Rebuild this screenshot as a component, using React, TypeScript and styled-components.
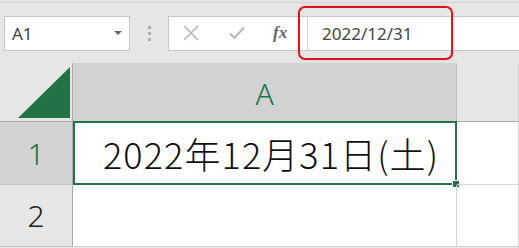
import React from 'react';
import styled, { createGlobalStyle } from 'styled-components';

const GlobalStyle = createGlobalStyle`
  html, body {
    margin: 0;
    padding: 0;
    background: #e6e6e6;
    overflow: hidden;
  }
`;

const Page = styled.div`
  width: 519px;
  height: 248px;
  background: #e6e6e6;
  font-family: 'Noto Sans', 'Liberation Sans', sans-serif;
`;

const TopRule = styled.div`
  height: 2px;
  border-bottom: 1px solid #d3d3d3;
`;

const Toolbar = styled.div`
  position: relative;
  display: flex;
  align-items: center;
  height: 60px;
  box-sizing: border-box;
  padding: 12px 0;
`;

const NameBox = styled.div`
  margin-left: 4px;
  width: 126px;
  height: 35px;
  box-sizing: border-box;
  background: #fff;
  border: 1px solid #c6c6c6;
  display: flex;
  align-items: center;
  justify-content: space-between;
  padding: 0 7px 0 7px;
  font-size: 17px;
  color: #444;
`;

const Caret = styled.span`
  width: 0;
  height: 0;
  border-left: 4px solid transparent;
  border-right: 4px solid transparent;
  border-top: 4px solid #666;
`;

const Grip = styled.div`
  width: 38px;
  display: flex;
  flex-direction: column;
  align-items: center;
  gap: 3px;
  span {
    width: 3px;
    height: 3px;
    background: #b0b0b0;
  }
`;

const FormulaBar = styled.div`
  flex: 1;
  height: 35px;
  display: flex;
  box-sizing: border-box;
  border: 1px solid #c6c6c6;
  border-right: none;
  background: #fff;
`;

const Buttons = styled.div`
  width: 139px;
  display: flex;
  align-items: center;
  padding-left: 14px;
  gap: 30px;
  box-sizing: border-box;
  border-right: 1px solid #d4d4d4;
`;

const Fx = styled.span`
  font-family: 'Liberation Serif', serif;
  font-style: italic;
  font-weight: bold;
  font-size: 17px;
  color: #666;
  margin-left: -2px;
`;

const FormulaInput = styled.div`
  flex: 1;
  display: flex;
  align-items: center;
  padding-left: 14px;
  font-size: 17px;
  color: #444;
`;

const Highlight = styled.div`
  position: absolute;
  left: 298px;
  top: 3px;
  width: 155px;
  height: 54px;
  box-sizing: border-box;
  border: 2px solid #e0141e;
  border-radius: 7px;
  box-shadow: 0 0 3px rgba(0, 0, 0, 0.15);
`;

const Grid = styled.div`
  display: grid;
  grid-template-columns: 73px 384px 1fr;
  grid-template-rows: 59px 63px 62px;
  background: #fff;
`;

const Corner = styled.div`
  background: #e6e6e6;
  border-right: 1px solid #ababab;
  border-bottom: 1px solid #ababab;
  display: flex;
  align-items: flex-end;
  justify-content: flex-end;
  padding: 0 2px 3px 0;
`;

const ColHeader = styled.div<{ $active?: boolean }>`
  background: ${(p) => (p.$active ? '#d2d2d2' : '#e6e6e6')};
  border-right: 1px solid ${(p) => (p.$active ? '#c0c0c0' : '#d4d4d4')};
  border-bottom: 1px solid #ababab;
  display: flex;
  align-items: center;
  justify-content: center;
  font-size: 30px;
  font-weight: 300;
  color: ${(p) => (p.$active ? '#217346' : '#444')};
  padding-top: 2px;
`;

const RowHeader = styled.div<{ $active?: boolean }>`
  background: ${(p) => (p.$active ? '#d2d2d2' : '#e6e6e6')};
  border-right: 1px solid #ababab;
  border-bottom: 1px solid #c6c6c6;
  display: flex;
  align-items: center;
  justify-content: center;
  font-size: 30px;
  font-weight: 300;
  color: ${(p) => (p.$active ? '#217346' : '#222')};
`;

const Cell = styled.div<{ $selected?: boolean }>`
  position: relative;
  box-sizing: border-box;
  border-right: 1px solid #d4d4d4;
  border-bottom: 1px solid #d4d4d4;
  ${(p) =>
    p.$selected &&
    `
    border: 2px solid #217346;
    margin: -1px 0 0 0;
  `}
  display: flex;
  align-items: center;
  padding-left: 28px;
  font-family: 'Noto Sans CJK JP', 'Noto Sans', sans-serif;
  font-size: 36px;
  font-weight: 300;
  letter-spacing: 1.1px;
  color: #111;
  white-space: nowrap;
`;

const FillHandle = styled.span`
  position: absolute;
  right: -5px;
  bottom: -5px;
  width: 6px;
  height: 6px;
  background: #217346;
  border: 1px solid #fff;
`;

const Cross = () => (
  <svg width="16" height="16" viewBox="0 0 16 16">
    <path d="M1 1L15 15M15 1L1 15" stroke="#b8b8b8" strokeWidth="1.6" fill="none" />
  </svg>
);

const Check = () => (
  <svg width="16" height="14" viewBox="0 0 16 14">
    <path d="M1 7.5L5.5 12L15 1.5" stroke="#b8b8b8" strokeWidth="2.2" fill="none" />
  </svg>
);

const Triangle = () => (
  <svg width="52" height="51" viewBox="0 0 52 51">
    <polygon points="52,0 52,51 0,51" fill="#217346" />
  </svg>
);

export default function App() {
  return (
    <Page>
      <GlobalStyle />
      <TopRule />
      <Toolbar>
        <NameBox>
          A1
          <Caret />
        </NameBox>
        <Grip>
          <span />
          <span />
          <span />
        </Grip>
        <FormulaBar>
          <Buttons>
            <Cross />
            <Check />
            <Fx>fx</Fx>
          </Buttons>
          <FormulaInput>2022/12/31</FormulaInput>
        </FormulaBar>
        <Highlight />
      </Toolbar>
      <Grid>
        <Corner>
          <Triangle />
        </Corner>
        <ColHeader $active>A</ColHeader>
        <ColHeader />
        <RowHeader $active>1</RowHeader>
        <Cell $selected>
          2022年12月31日(土)
          <FillHandle />
        </Cell>
        <Cell />
        <RowHeader>2</RowHeader>
        <Cell />
        <Cell />
      </Grid>
    </Page>
  );
}
